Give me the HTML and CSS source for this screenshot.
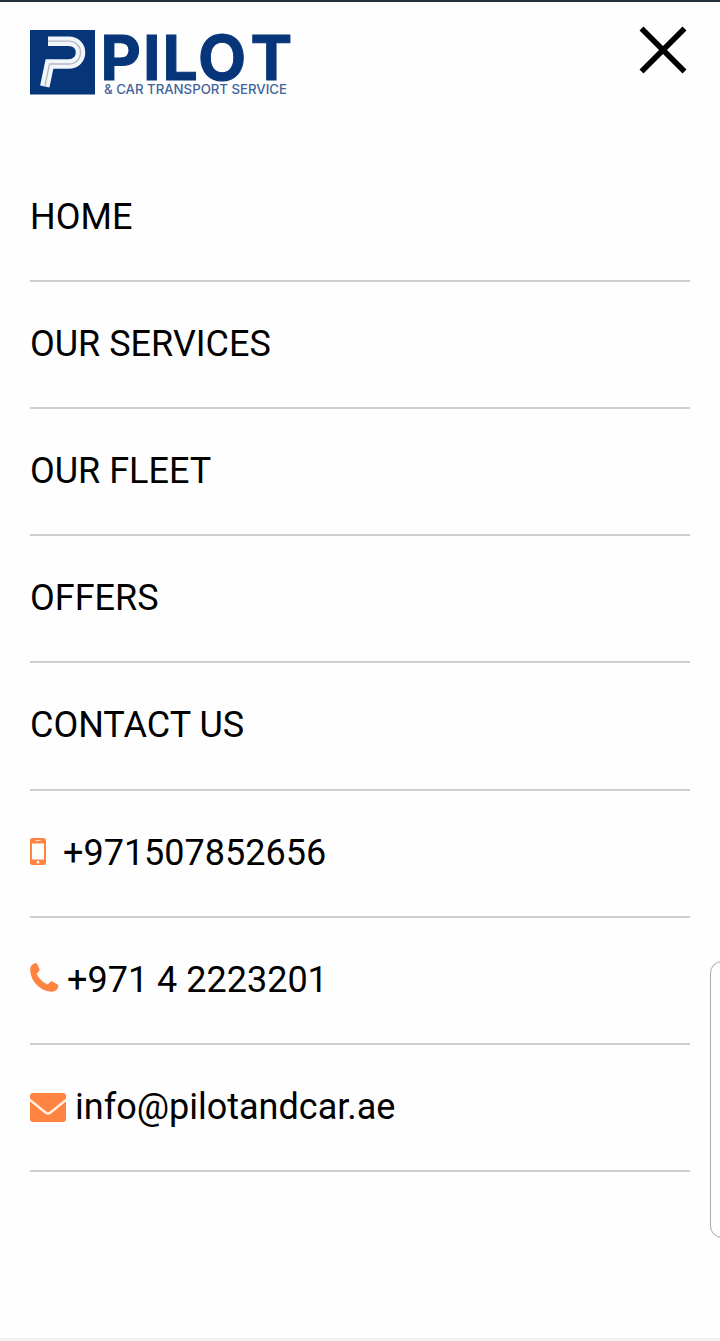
FILE: index.html
```html
<!DOCTYPE html>
<html lang="en">
<head>
<meta charset="utf-8">
<meta name="viewport" content="width=device-width">
<title>Pilot &amp; Car Transport Service</title>
<link rel="stylesheet" href="styles.css">
</head>
<body>
<div class="screen">
  <header class="header">
    <svg class="logo" viewBox="0 0 262 68" role="img" aria-label="Pilot">
      <rect class="logo-box" y="0" width="65" height="64.500"/>
      <path class="logo-mark" d="M18 11.200H38.500C54.500 11.200 54.500 34 38.500 34H19.500L14.800 56.500"/>
      <path class="logo-groove" d="M18 11.200H38.500C54.500 11.200 54.500 34 38.500 34H19.500L14.800 56.500"/>
      <text class="logo-name" x="70.500 113 132.500 168 220.500" y="50">PILOT</text>
      <text class="logo-tag" x="74" y="64" textLength="183" lengthAdjust="spacingAndGlyphs">&amp; CAR TRANSPORT SERVICE</text>
    </svg>
    <svg class="close" viewBox="0 0 48 48"><path d="M2.500 2.500L45.500 45.500M45.500 2.500L2.500 45.500"/></svg>
  </header>
  <nav class="menu">
    <a class="item">HOME</a>
    <a class="item">OUR SERVICES</a>
    <a class="item">OUR FLEET</a>
    <a class="item">OFFERS</a>
    <a class="item">CONTACT US</a>
    <a class="item">
      <svg class="icon mobile" viewBox="0 0 16 27"><path fill-rule="evenodd" d="M2.500 0H13.500Q16 0 16 2.500V24.500Q16 27 13.500 27H2.500Q0 27 0 24.500V2.500Q0 0 2.500 0ZM2 5.500V21.500H14V5.500ZM5.500 2.300V3.100H10.500V2.300ZM8 22.800A1.400 1.400 0 1 0 8 25.600A1.400 1.400 0 1 0 8 22.800Z"/></svg>
      <span>+971507852656</span>
    </a>
    <a class="item">
      <svg class="icon phone" viewBox="0 0 29 29"><path d="M0.200 7C0 3 2.500 0.800 5 0.200Q6.500 -0.200 7.100 1L9.500 6Q10 7.200 9 8.200L7.200 10.200Q6.700 10.800 7.200 11.700Q10.500 18 16.500 21.100Q17.500 21.600 18.200 20.900L20.300 18.800Q21.200 18 22.300 18.600L27.500 21.500Q28.800 22.200 28.300 23.700C27.500 26.500 25.500 28.600 22 28.700C11 28.700 0.300 18 0.200 7Z"/></svg>
      <span>+971 4 2223201</span>
    </a>
    <a class="item">
      <svg class="icon mail" viewBox="0 0 36 29"><rect width="36" height="29" rx="3"/><path class="flap" d="M-1 6.200L15.500 19.500Q18 21.500 20.500 19.500L37 6.200"/></svg>
      <span>info@pilotandcar.ae</span>
    </a>
  </nav>
  <div class="side-handle"></div>
</div>
</body>
</html>
```
FILE: styles.css
```css
* { box-sizing: border-box; }
body { margin: 0; background: #fefefe; font-family: Roboto, sans-serif; color: #000; }
.screen {
  position: relative;
  height: 1341px;
  overflow: hidden;
  padding: 0 30px;
  border-top: 2px solid #25303b;
  border-bottom: 3px solid #f2f2f2;
}
.header { display: flex; justify-content: space-between; height: 152.600px; padding-top: 24px; }
.logo { width: 262px; height: 68px; margin-top: 4px; overflow: visible; }
.logo-box { fill: #06357a; }
.logo-mark { fill: none; stroke: #f2f6fb; stroke-width: 9.500; }
.logo-groove { fill: none; stroke: #b4b9c2; stroke-width: 1.300; }
.logo-name { font: 700 62.500px Inter, sans-serif; fill: #06357a; stroke: #06357a; stroke-width: 1; }
.logo-tag { font: 500 13px Inter, sans-serif; fill: #42639a; }
.close { width: 48px; height: 48px; margin-right: 3px; fill: none; stroke: #000; stroke-width: 5.600; }
.menu { display: flex; flex-direction: column; }
.item {
  display: flex;
  align-items: center;
  height: 127.200px;
  padding-bottom: 1px;
  border-bottom: 2px solid #cfcfcf;
  font-size: 36px;
  line-height: 42px;
  white-space: nowrap;
}
.icon { flex: none; fill: #ff8441; }
.mobile { width: 16px; height: 27px; margin: 0 17px 2px 0; }
.phone { width: 29px; height: 29px; margin: 0 8px 5px 0; }
.mail { width: 36px; height: 29px; margin-right: 9px; }
.flap { fill: none; stroke: #fff0e2; stroke-width: 2.500; }
.side-handle {
  position: absolute;
  left: 710px;
  top: 959px;
  width: 30px;
  height: 277px;
  border: 1px solid #a8a8a8;
  border-radius: 12px;
}
```
